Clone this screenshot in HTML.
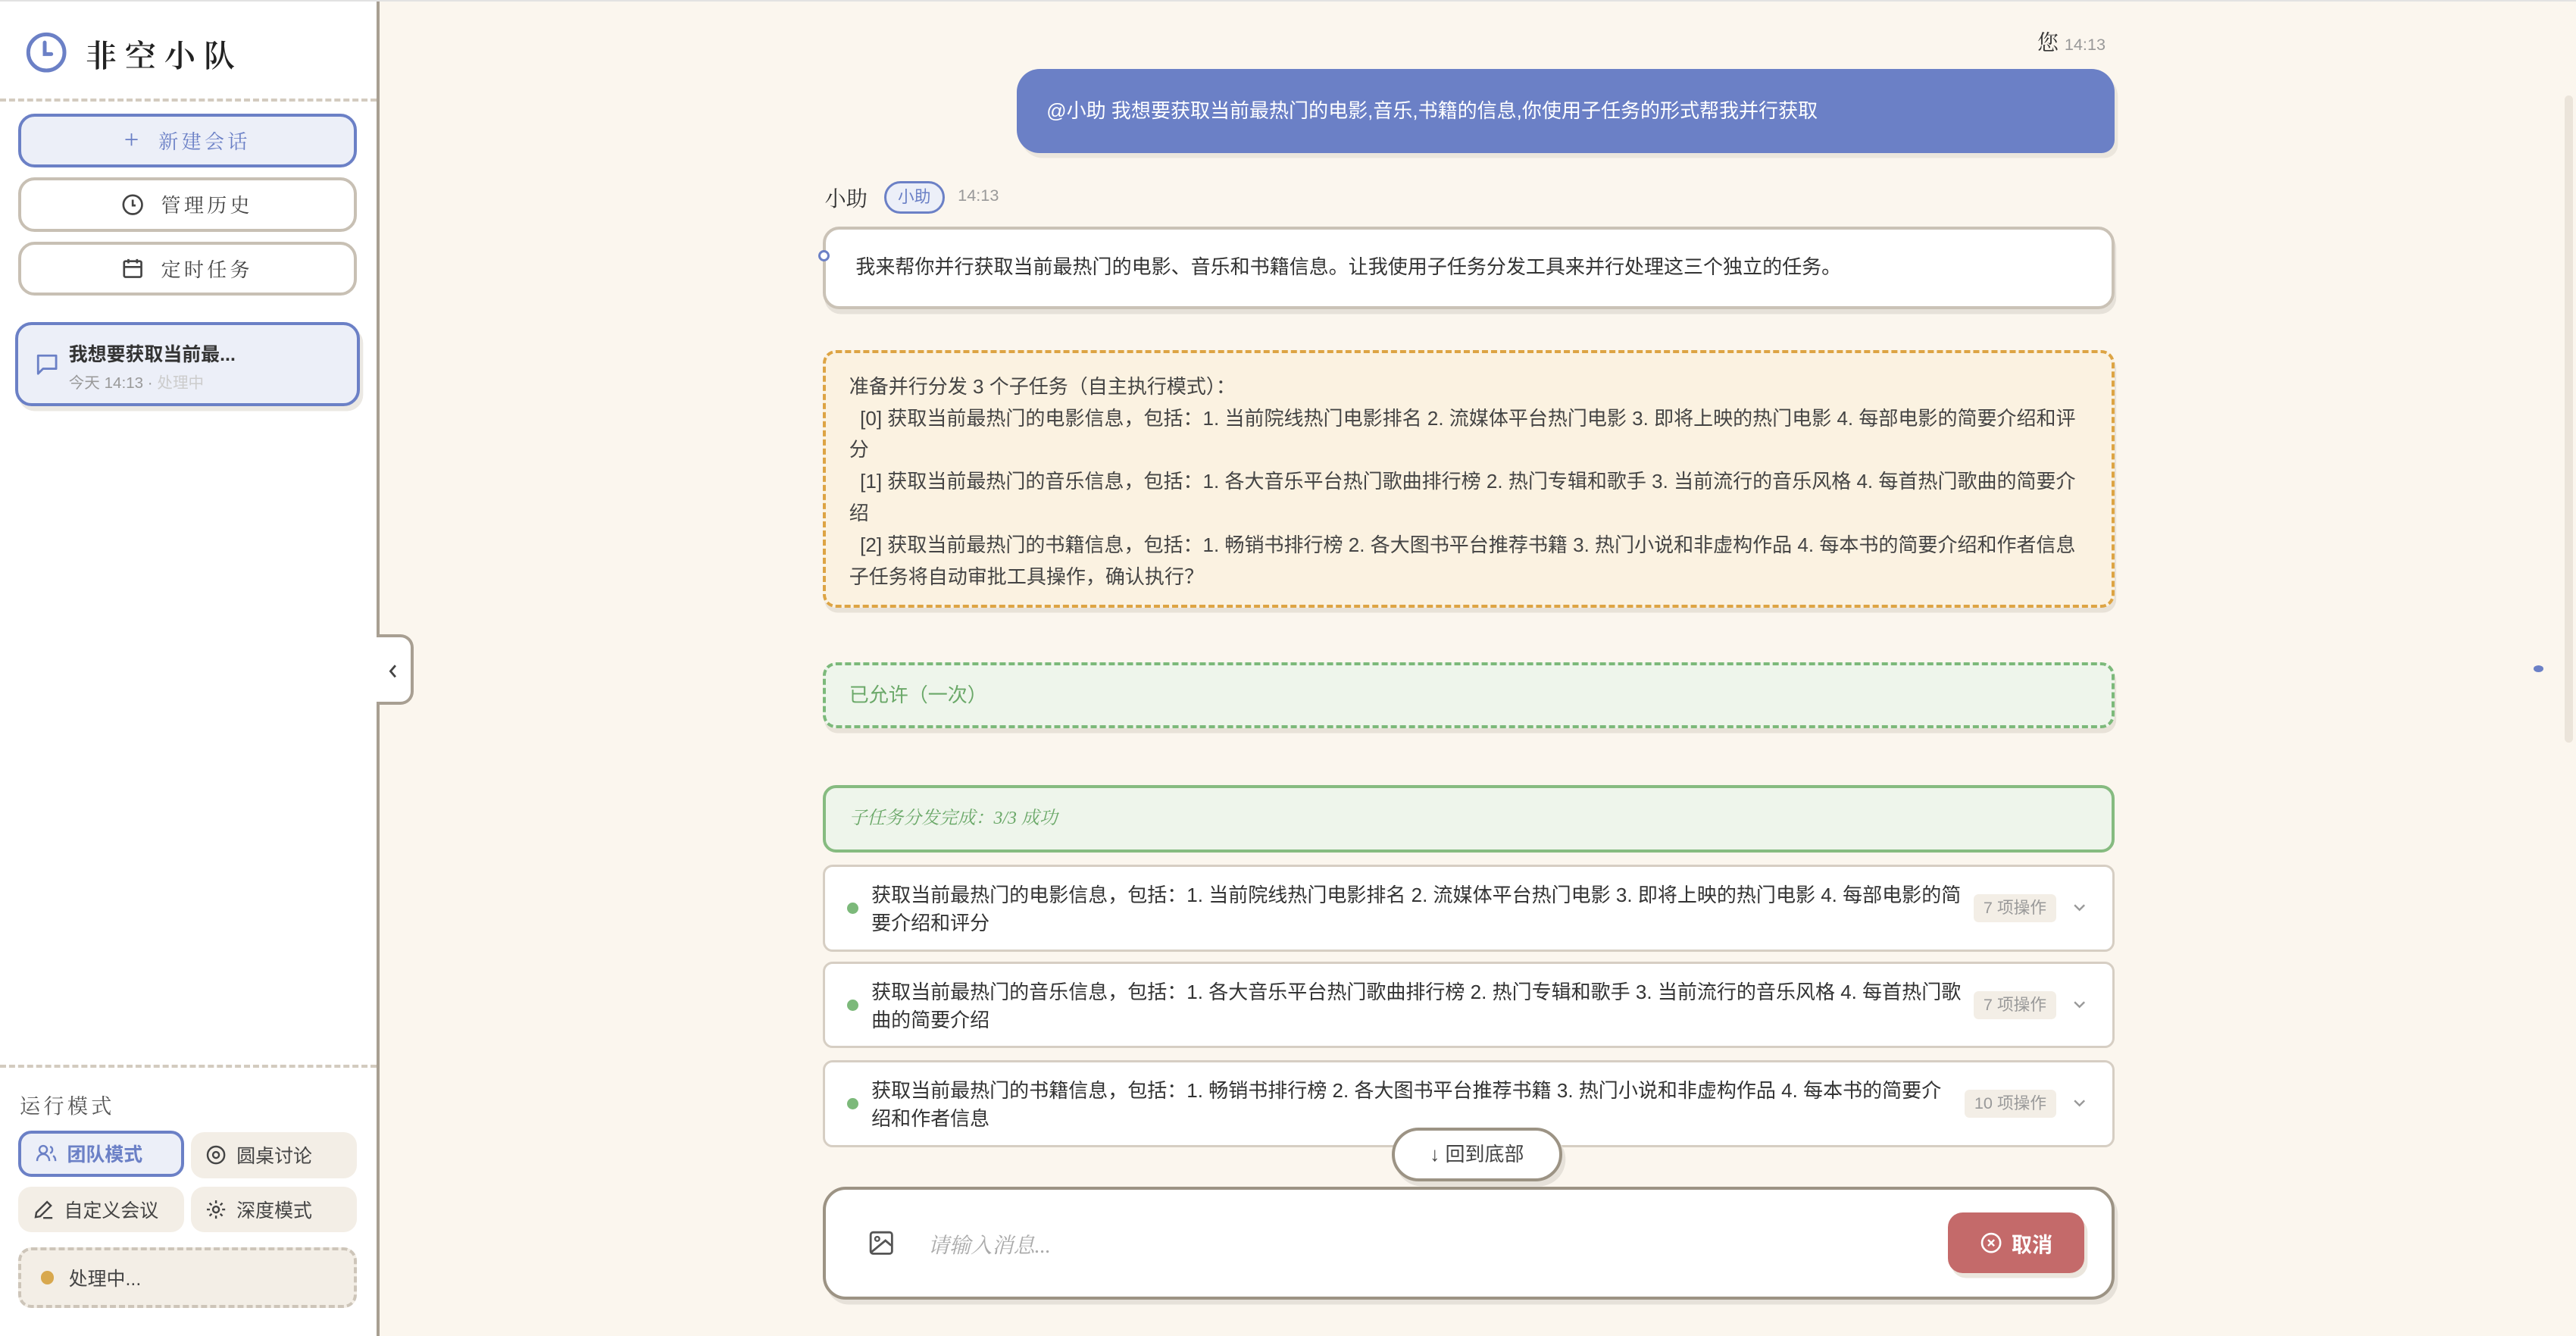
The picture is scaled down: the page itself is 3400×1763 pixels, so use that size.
<!DOCTYPE html>
<html><head><meta charset="utf-8">
<style>
html{zoom:2.1684}
*{box-sizing:border-box;margin:0;padding:0}
body{width:1568px;height:813px;overflow:hidden;background:#fbf6ee;font-family:"Liberation Sans","Noto Sans CJK SC",sans-serif;color:#333;position:relative}
.abs{position:absolute}
.serif{font-family:"Liberation Serif","Noto Serif CJK SC",serif}
.side{left:0;top:1px;width:231px;height:812px;background:#fff;border-right:2px solid #a89f92}
.dash{left:0;width:229px;border-top:2px dashed #d3cbbf}
.btn{left:11px;width:206px;height:33px;border-radius:10px;border:2px solid #c8c0b4;background:#fff;display:flex;align-items:center;justify-content:center;font-size:12px;color:#444;gap:10px;letter-spacing:2px}
.btn svg{width:14px;height:14px}
.mode{height:28px;border-radius:8px;background:#f3eee6;font-size:11.5px;color:#444;display:flex;align-items:center;padding-left:9px;gap:6px}
.card{left:501px;width:786px;border-radius:8px}
.task{left:501px;width:786px;height:53px;background:#fff;border:1.5px solid #d6cec3;border-radius:6px}
.task .dot{position:absolute;left:13px;top:22px;width:7px;height:7px;border-radius:50%;background:#7cb97a}
.task .t{position:absolute;left:28px;top:9px;width:666px;font-size:12px;line-height:17px;color:#333}
.task .b{position:absolute;right:34px;top:17px;height:17px;padding:0 6px;background:#f3eee6;border-radius:3px;font-size:10px;line-height:17px;color:#999}
.task .c{position:absolute;right:16px;top:22px}
</style></head><body>
<div class="abs" style="left:0;top:0;width:1568px;height:1px;background:#e2e2e2"></div>
<div class="abs side">
  <svg class="abs" style="left:15px;top:18px" width="26" height="26" viewBox="0 0 26 26"><circle cx="13" cy="13" r="11" fill="none" stroke="#6b80c6" stroke-width="2.3"/><path d="M12 7v7h4" fill="none" stroke="#6b80c6" stroke-width="2.3" stroke-linecap="round"/></svg>
  <div class="abs serif" style="left:52px;top:18px;font-size:19px;letter-spacing:5px;color:#222;font-weight:600">非空小队</div>
  <div class="abs dash" style="top:59px"></div>
  <div class="abs btn serif" style="top:68px;background:#eceff8;border-color:#6b80c6;color:#6b80c6"><span style="font-size:16px">+</span>新建会话</div>
  <div class="abs btn serif" style="top:107px"><svg viewBox="0 0 16 16"><circle cx="8" cy="8" r="6.5" fill="none" stroke="#444" stroke-width="1.4"/><path d="M8 4.5V8.5h2" fill="none" stroke="#444" stroke-width="1.4"/></svg>管理历史</div>
  <div class="abs btn serif" style="top:146px"><svg viewBox="0 0 16 16"><rect x="2" y="3" width="12" height="11" rx="1" fill="none" stroke="#444" stroke-width="1.4"/><path d="M2 7h12M5 1.5v3M11 1.5v3" stroke="#444" stroke-width="1.4"/></svg>定时任务</div>
  <div class="abs" style="left:9px;top:195px;width:210px;height:51px;border-radius:10px;border:2px solid #6b80c6;background:#eceff8;box-shadow:2px 3px 0 #ebe8e3">
    <svg class="abs" style="left:11px;top:17px" width="14" height="14" viewBox="0 0 14 14"><path d="M1.5 1.5h11v8h-8l-3 3z" fill="none" stroke="#6b80c6" stroke-width="1.3" stroke-linejoin="round"/></svg>
    <div class="abs" style="left:31px;top:9px;font-size:11.5px;font-weight:bold;color:#333">我想要获取当前最...</div>
    <div class="abs" style="left:31px;top:27px;font-size:9.5px;color:#999">今天 14:13 · <span style="color:#ccc">处理中</span></div>
  </div>
  <div class="abs dash" style="top:647px"></div>
  <div class="abs serif" style="left:12px;top:662px;font-size:12.5px;color:#555;letter-spacing:2px">运行模式</div>
  <div class="abs mode" style="left:11px;top:687px;width:101px;background:#eceff8;border:2px solid #6b80c6;color:#6b80c6;font-weight:bold"><svg width="13" height="13" viewBox="0 0 14 14"><circle cx="5" cy="4.5" r="2.5" fill="none" stroke="#6b80c6" stroke-width="1.2"/><path d="M1 12c0-3 2-4.5 4-4.5s4 1.5 4 4.5M9.5 2.5a2.3 2.3 0 010 4.3M11.5 8.5c1 .7 1.5 2 1.5 3.5" fill="none" stroke="#6b80c6" stroke-width="1.2"/></svg>团队模式</div>
  <div class="abs mode" style="left:116px;top:688px;width:101px"><svg width="13" height="13" viewBox="0 0 14 14"><circle cx="7" cy="7" r="5.5" fill="none" stroke="#444" stroke-width="1.2"/><circle cx="7" cy="7" r="2" fill="none" stroke="#444" stroke-width="1.2"/></svg>圆桌讨论</div>
  <div class="abs mode" style="left:11px;top:721px;width:101px"><svg width="13" height="13" viewBox="0 0 14 14"><path d="M2 12l.5-3L9.5 2l2.5 2.5-7 7zM7 12.5h6" fill="none" stroke="#444" stroke-width="1.2"/></svg>自定义会议</div>
  <div class="abs mode" style="left:116px;top:721px;width:101px"><svg width="13" height="13" viewBox="0 0 14 14"><circle cx="7" cy="7" r="2" fill="none" stroke="#444" stroke-width="1.2"/><path d="M7 1v2M7 11v2M1 7h2M11 7h2M2.8 2.8l1.4 1.4M9.8 9.8l1.4 1.4M2.8 11.2l1.4-1.4M9.8 4.2l1.4-1.4" stroke="#444" stroke-width="1.2"/></svg>深度模式</div>
  <div class="abs mode" style="left:11px;top:758px;width:206px;height:37px;border:2px dashed #cdc5b9;padding-left:12px;gap:9px"><span style="width:8px;height:8px;border-radius:50%;background:#d8a84e;display:inline-block"></span>处理中...</div>
</div>
<div class="abs" style="left:229px;top:386px;width:23px;height:43px;background:#fff;border:2px solid #a89f92;border-left:none;border-radius:0 8px 8px 0"><svg class="abs" style="left:6px;top:16px" width="8" height="9" viewBox="0 0 8 9"><path d="M5.5 1L2.5 4.5 5.5 8" fill="none" stroke="#444" stroke-width="1.3"/></svg></div>

<div class="abs" style="left:1240px;top:16px;font-size:13px;color:#333" ><span class="serif">您</span> <span style="font-size:10px;color:#999">14:13</span></div>
<div class="abs" style="left:619px;top:42px;width:668px;height:51px;background:#6b80c6;border-radius:14px 14px 8px 14px;box-shadow:2px 3px 0 #ebe6dd;color:#fff;font-size:12px;line-height:51px;padding-left:18px">@小助 我想要获取当前最热门的电影,音乐,书籍的信息,你使用子任务的形式帮我并行获取</div>
<div class="abs serif" style="left:502px;top:111px;font-size:13px;color:#333">小助</div>
<div class="abs" style="left:538px;top:110px;width:37px;height:20px;border:1.5px solid #6b80c6;background:#eceff8;border-radius:10px;font-size:10px;color:#6b80c6;text-align:center;line-height:17px">小助</div>
<div class="abs" style="left:583px;top:113px;font-size:10px;color:#999">14:13</div>
<div class="abs card" style="top:138px;height:50px;background:#fff;border:2px solid #cac2b6;border-radius:10px;box-shadow:1px 3px 0 #e6e1d9;font-size:12px;line-height:46px;padding-left:18px">我来帮你并行获取当前最热门的电影、音乐和书籍信息。让我使用子任务分发工具来并行处理这三个独立的任务。</div>
<div class="abs" style="left:498px;top:152px;width:7px;height:7px;border-radius:50%;border:1.5px solid #6b80c6;background:#fff"></div>
<div class="abs card" style="top:213px;height:157px;background:#fbf2e1;border:2px dashed #dda444;box-shadow:1px 3px 0 #e8e2d8;padding:11px 14px;font-size:12px;line-height:19.3px;color:#444">准备并行分发 3 个子任务（自主执行模式）：<br>&nbsp;&nbsp;[0] 获取当前最热门的电影信息，包括：1. 当前院线热门电影排名 2. 流媒体平台热门电影 3. 即将上映的热门电影 4. 每部电影的简要介绍和评分<br>&nbsp;&nbsp;[1] 获取当前最热门的音乐信息，包括：1. 各大音乐平台热门歌曲排行榜 2. 热门专辑和歌手 3. 当前流行的音乐风格 4. 每首热门歌曲的简要介绍<br>&nbsp;&nbsp;[2] 获取当前最热门的书籍信息，包括：1. 畅销书排行榜 2. 各大图书平台推荐书籍 3. 热门小说和非虚构作品 4. 每本书的简要介绍和作者信息<br>子任务将自动审批工具操作，确认执行？</div>
<div class="abs card" style="top:403px;height:40px;background:#eef5eb;border:2px dashed #7cb97a;box-shadow:1px 3px 0 #e8e2d8;font-size:12px;line-height:36px;padding-left:14px;color:#6aa868">已允许（一次）</div>
<div class="abs card serif" style="top:478px;height:41px;background:#eef5eb;border:2px solid #86bb80;font-size:11px;line-height:37px;padding-left:14px;color:#6aa868;font-style:italic">子任务分发完成：3/3 成功</div>
<div class="abs task" style="top:526px"><div class="dot"></div><div class="t">获取当前最热门的电影信息，包括：1. 当前院线热门电影排名 2. 流媒体平台热门电影 3. 即将上映的热门电影 4. 每部电影的简要介绍和评分</div><div class="b">7 项操作</div><svg class="c" width="8" height="6" viewBox="0 0 8 6"><path d="M1 1.5l3 3 3-3" fill="none" stroke="#999" stroke-width="1.1"/></svg></div>
<div class="abs task" style="top:585px"><div class="dot"></div><div class="t">获取当前最热门的音乐信息，包括：1. 各大音乐平台热门歌曲排行榜 2. 热门专辑和歌手 3. 当前流行的音乐风格 4. 每首热门歌曲的简要介绍</div><div class="b">7 项操作</div><svg class="c" width="8" height="6" viewBox="0 0 8 6"><path d="M1 1.5l3 3 3-3" fill="none" stroke="#999" stroke-width="1.1"/></svg></div>
<div class="abs task" style="top:645px"><div class="dot"></div><div class="t" style="width:656px">获取当前最热门的书籍信息，包括：1. 畅销书排行榜 2. 各大图书平台推荐书籍 3. 热门小说和非虚构作品 4. 每本书的简要介绍和作者信息</div><div class="b">10 项操作</div><svg class="c" width="8" height="6" viewBox="0 0 8 6"><path d="M1 1.5l3 3 3-3" fill="none" stroke="#999" stroke-width="1.1"/></svg></div>
<div class="abs" style="left:847px;top:686px;width:104px;height:33px;background:#fff;border:2px solid #9c9384;border-radius:17px;box-shadow:2px 3px 0 #e6e1d9;font-size:12px;text-align:center;line-height:29px;color:#444">↓ 回到底部</div>
<div class="abs" style="left:501px;top:722px;width:786px;height:69px;background:#fff;border:2px solid #9c9384;border-radius:14px;box-shadow:2px 3px 0 #e6e1d9">
  <svg class="abs" style="left:26px;top:25px" width="15" height="15" viewBox="0 0 15 15"><rect x="1" y="1" width="13" height="13" rx="1.5" fill="none" stroke="#555" stroke-width="1.3"/><circle cx="5" cy="5" r="1.3" fill="none" stroke="#555" stroke-width="1.1"/><path d="M1.5 13L10 6l3.5 3" fill="none" stroke="#555" stroke-width="1.3"/></svg>
  <div class="abs serif" style="left:62px;top:24px;font-size:13px;color:#aaa;font-style:italic">请输入消息...</div>
  <div class="abs" style="left:683px;top:14px;width:83px;height:37px;background:#c46a6a;border-radius:9px;box-shadow:2px 3px 0 #ebe6dd;color:#fff;font-size:12.5px;font-weight:bold;display:flex;align-items:center;justify-content:center;gap:6px"><svg width="13" height="13" viewBox="0 0 14 14"><circle cx="7" cy="7" r="6" fill="none" stroke="#fff" stroke-width="1.3"/><path d="M5 5l4 4M9 5l-4 4" stroke="#fff" stroke-width="1.2"/></svg>取消</div>
</div>
<div class="abs" style="left:1561px;top:58px;width:5px;height:394px;background:#ebe4da;border-radius:3px"></div>
<div class="abs" style="left:1542px;top:405px;width:6px;height:4px;background:#6b80c6;border-radius:50%"></div>
</body></html>
